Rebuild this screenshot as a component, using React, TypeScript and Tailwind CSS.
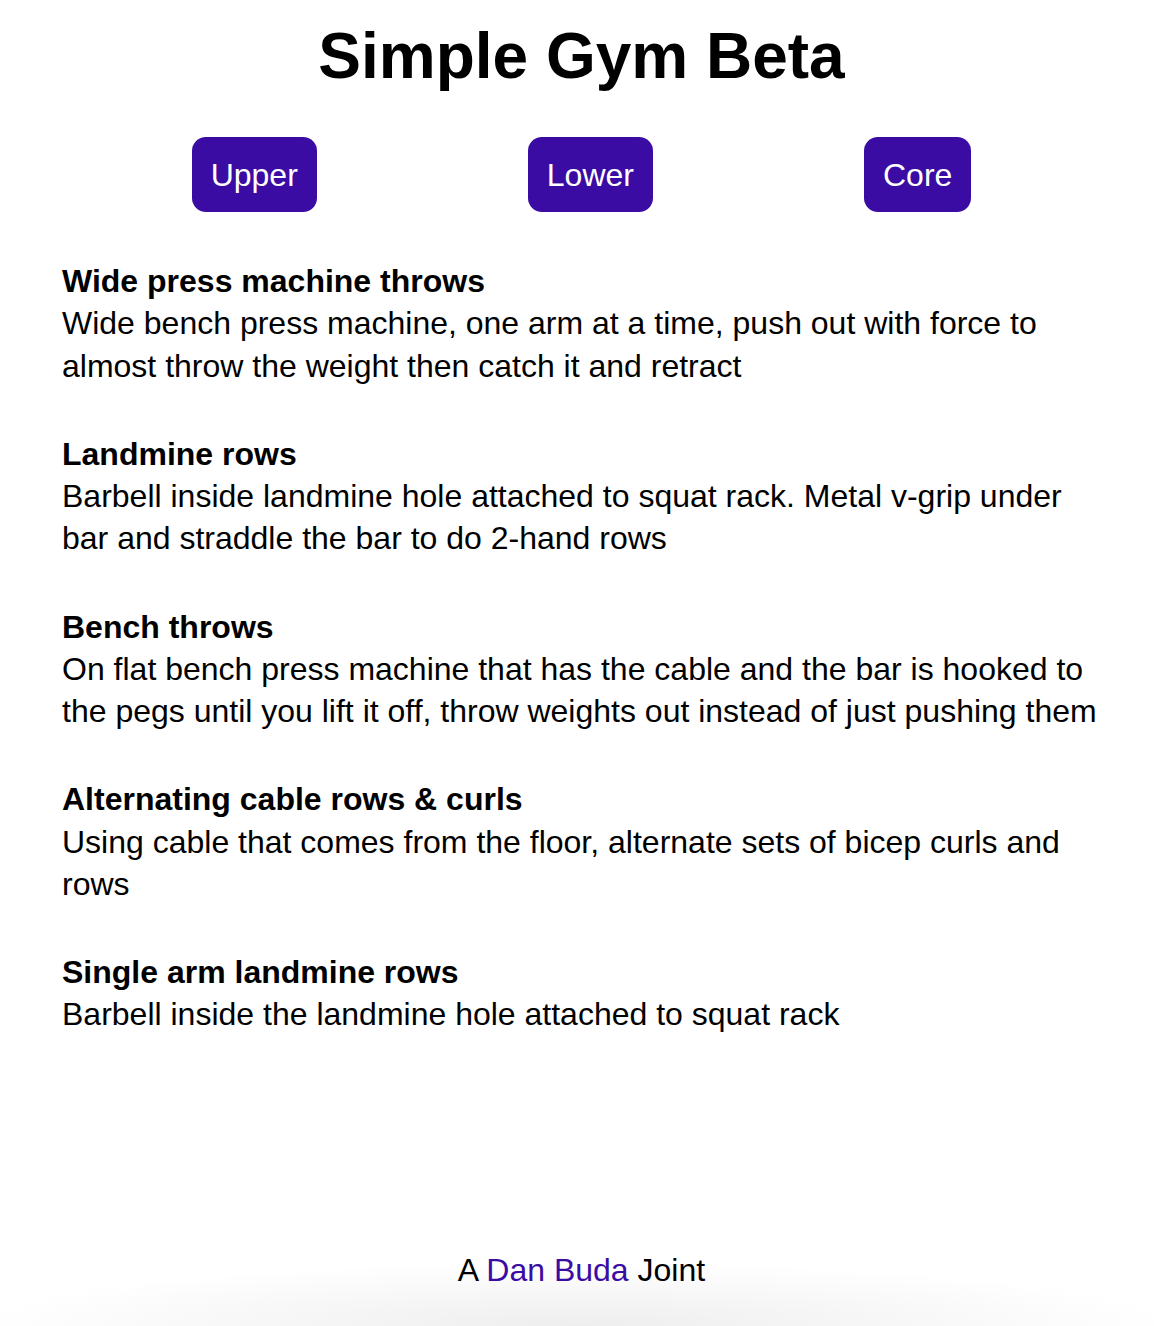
import React from "react";

const exercises = [
  {
    title: "Wide press machine throws",
    desc: "Wide bench press machine, one arm at a time, push out with force to almost throw the weight then catch it and retract",
  },
  {
    title: "Landmine rows",
    desc: "Barbell inside landmine hole attached to squat rack. Metal v-grip under bar and straddle the bar to do 2-hand rows",
  },
  {
    title: "Bench throws",
    desc: "On flat bench press machine that has the cable and the bar is hooked to the pegs until you lift it off, throw weights out instead of just pushing them",
  },
  {
    title: "Alternating cable rows & curls",
    desc: "Using cable that comes from the floor, alternate sets of bicep curls and rows",
  },
  {
    title: "Single arm landmine rows",
    desc: "Barbell inside the landmine hole attached to squat rack",
  },
];

export default function App() {
  return (
    <div className="min-h-[1326px] flex flex-col bg-white text-black font-['Liberation_Sans',Arial,Helvetica,sans-serif]">
      <main className="pl-[62px] pr-[53px] pt-[19px]">
        <h1 className="text-center text-[64px] leading-[74px] font-bold">Simple Gym Beta</h1>
        <div className="mt-[44px] flex justify-center gap-[211px]">
          {["Upper", "Lower", "Core"].map((b) => (
            <button
              key={b}
              className="bg-[#3a0ca3] text-white text-[32px] leading-[37px] px-[19px] pt-[20px] pb-[18px] rounded-[14px]"
            >
              {b}
            </button>
          ))}
        </div>
        <div className="mt-[48px] flex flex-col gap-[46px]">
          {exercises.map((e) => (
            <div key={e.title} className="text-[32px] leading-[42.25px]">
              <div className="font-bold">{e.title}</div>
              <div>{e.desc}</div>
            </div>
          ))}
        </div>
      </main>
      <footer className="mt-auto h-[100px] pl-[62px] pr-[53px] pt-[26px] text-center text-[32px] leading-[37px] bg-[radial-gradient(ellipse_600px_64px_at_50%_100%,#eeeeee,#ffffff)]">
        A <a className="text-[#3a0ca3]">Dan Buda</a> Joint
      </footer>
    </div>
  );
}
